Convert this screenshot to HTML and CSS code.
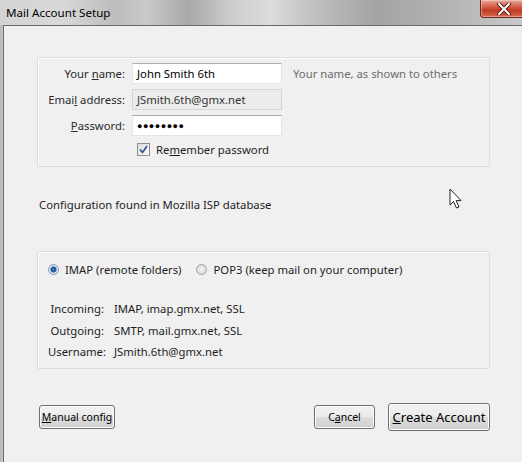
FILE: index.html
```html
<!DOCTYPE html>
<html>
<head>
<meta charset="utf-8">
<link rel="stylesheet" href="styles.css">
</head>
<body>
<div class="window">
  <div class="titlebar">
    <span class="title">Mail Account Setup</span>
    <div class="close">
      <svg width="16" height="12" viewBox="0 0 16 12"><path d="M3 1 L13 11 M13 1 L3 11" stroke="#5a1a10" stroke-width="4" stroke-linecap="round"/><path d="M3 1 L13 11 M13 1 L3 11" stroke="#fff" stroke-width="2" stroke-linecap="round"/></svg>
    </div>
  </div>
  <div class="client">
    <div class="group group-top">
      <div class="form">
        <label class="lbl">Your <u>n</u>ame:</label>
        <div class="input">John Smith 6th</div>
        <span class="hint">Your name, as shown to others</span>
        <label class="lbl">Emai<u>l</u> address:</label>
        <div class="input disabled">JSmith.6th@gmx.net</div>
        <span></span>
        <label class="lbl"><u>P</u>assword:</label>
        <div class="input pw">&#9679;&#9679;&#9679;&#9679;&#9679;&#9679;&#9679;&#9679;</div>
        <span></span>
        <span></span>
        <div class="check-row">
          <span class="checkbox"><svg width="9" height="9" viewBox="0 0 9 9"><path d="M1 4.5 L3.5 7.5 L8 1" fill="none" stroke="#2c4f8a" stroke-width="1.6"/></svg></span>
          <span>Re<u>m</u>ember password</span>
        </div>
        <span></span>
      </div>
    </div>
    <p class="found">Configuration found in Mozilla ISP database</p>
    <div class="group group-bottom">
      <div class="radios">
        <span class="radio on"></span><span class="rlabel">IMAP (remote folders)</span>
        <span class="radio"></span><span class="rlabel">POP3 (keep mail on your computer)</span>
      </div>
      <div class="details">
        <span class="dl">Incoming:</span><span>IMAP, imap.gmx.net, SSL</span>
        <span class="dl">Outgoing:</span><span>SMTP, mail.gmx.net, SSL</span>
        <span class="dl">Username:</span><span>JSmith.6th@gmx.net</span>
      </div>
    </div>
    <div class="buttons">
      <button class="btn manual"><u>M</u>anual config</button>
      <span class="spacer"></span>
      <button class="btn cancel">C<u>a</u>ncel</button>
      <button class="btn create"><u>C</u>reate Account</button>
    </div>
    <svg class="cursor" width="14" height="22" viewBox="0 0 14 22"><path d="M1 1 L1 17 L4.5 13.5 L7.5 20 L10 19 L7.2 12.6 L12 12.6 Z" fill="#fff" stroke="#222" stroke-width="1" stroke-linejoin="round"/></svg>
  </div>
</div>
</body>
</html>
```

FILE: styles.css
```css
html, body {
  margin: 0;
  padding: 0;
  background: #f0f0f0;
}
body {
  font-family: "Noto Sans", "Open Sans", sans-serif;
  font-size: 11.3px;
  color: #1e1e1e;
}
.window {
  width: 522px;
  height: 462px;
  display: flex;
  flex-direction: column;
  background: linear-gradient(90deg, #b9b9b9 0, #c4c4c4 3px, #c8c8c8 100%);
  overflow: hidden;
}
.titlebar {
  height: 25px;
  flex: none;
  display: flex;
  align-items: flex-start;
  background: linear-gradient(90deg, #d4d4d4 0%, #d8d8d8 12%, #bdbdbd 22%, #c9c9c9 28%, #a9a9a9 36%, #cfcfcf 45%, #dcdcdc 52%, #c0c0c0 60%, #a4a4a4 72%, #b2b2b2 85%, #c9c9c9 100%);
}
.title {
  font-family: "Noto Sans", sans-serif;
  font-size: 11.6px;
  color: #000;
  margin: 5px 0 0 6px;
}
.close {
  margin-left: auto;
  margin-right: -6px;
  width: 46px;
  height: 17px;
  border: 1px solid #6e2418;
  border-top: none;
  border-radius: 0 0 4px 4px;
  background: linear-gradient(#e8a898 0%, #d2553e 45%, #c03a22 60%, #d66a50 100%);
  display: flex;
  align-items: center;
  justify-content: center;
  box-shadow: inset 0 0 0 1px rgba(255,255,255,0.35);
}
.client {
  position: relative;
  flex: 1;
  margin-left: 3px;
  border-left: 1px solid #6a6a6a;
  border-top: 1px solid #6a6a6a;
  background: #f0f0f0;
  padding: 31px 0 0 33px;
  display: flex;
  flex-direction: column;
}
.group {
  width: 453px;
  border: 1px solid #dcdcdc;
  box-shadow: 1px 1px 0 #fff inset;
  border-radius: 2px;
}
.group-top {
  height: 110px;
  box-sizing: border-box;
  padding-top: 5px;
}
.form {
  display: grid;
  grid-template-columns: 87px 150px auto;
  column-gap: 7px;
  row-gap: 5px;
  align-items: center;
}
.lbl {
  text-align: right;
  color: #2a2a2a;
}
.input {
  height: 21px;
  box-sizing: border-box;
  background: #fff;
  border: 1px solid #e2e3ea;
  border-top-color: #abadb3;
  padding: 2px 4px 0;
  line-height: 16px;
  color: #000;
}
.input.disabled {
  background: #ececec;
  border-color: #d6d6d6;
  color: #333;
}
.input.pw {
  font-size: 9px;
  letter-spacing: 0.5px;
  line-height: 16px;
}
.hint {
  color: #6d6d6d;
  margin-left: 4px;
}
.check-row {
  display: flex;
  align-items: center;
  gap: 6px;
  padding-left: 5px;
  margin-top: 1px;
  grid-column: 2 / 4;
}
.checkbox {
  width: 11px;
  height: 11px;
  border: 1px solid #8e8f8f;
  background: linear-gradient(135deg, #dcdcdc, #fbfbfb);
  display: flex;
  align-items: center;
  justify-content: center;
}
.found {
  margin: 30px 0 0 2px;
  line-height: 16px;
}
.group-bottom {
  margin-top: 38px;
  height: 118px;
  box-sizing: border-box;
  padding: 8px 0 0 10px;
}
.radios {
  display: flex;
  align-items: center;
  height: 18px;
}
.radio {
  width: 11px;
  height: 11px;
  border-radius: 50%;
  border: 1px solid #a0a0a0;
  background: radial-gradient(circle, #f4f4f4 0, #d4d4d4 100%);
  margin-right: 6px;
  box-sizing: border-box;
}
.radio.on {
  background: radial-gradient(circle, #3f7ab8 0, #1e4f8c 2.5px, #dbe6f2 3.5px, #eaeaea 100%);
  border-color: #7f9db9;
}
.rlabel {
  margin-right: 15px;
}
.details {
  margin-top: 23px;
  display: grid;
  grid-template-columns: 56px auto;
  column-gap: 10px;
  row-gap: 5.5px;
  line-height: 16px;
}
.dl {
  text-align: right;
}
.buttons {
  display: flex;
  align-items: center;
  margin-top: 34px;
  padding-left: 2px;
  width: 451px;
}
.spacer { flex: 1; }
.btn {
  font-family: "Noto Sans", sans-serif;
  font-size: 10.5px;
  color: #000;
  height: 24px;
  border: 1px solid #707070;
  border-radius: 3px;
  background: linear-gradient(#f2f2f2 0%, #ebebeb 48%, #dddddd 52%, #cfcfcf 100%);
  box-shadow: inset 0 0 0 1px #fcfcfc;
  padding: 0;
}
.manual { width: 76px; }
.cancel { width: 61px; margin-right: 13px; }
.create {
  width: 102px;
  height: 28px;
  font-size: 13px;
}
.cursor {
  position: absolute;
  left: 445px;
  top: 162px;
}
```
